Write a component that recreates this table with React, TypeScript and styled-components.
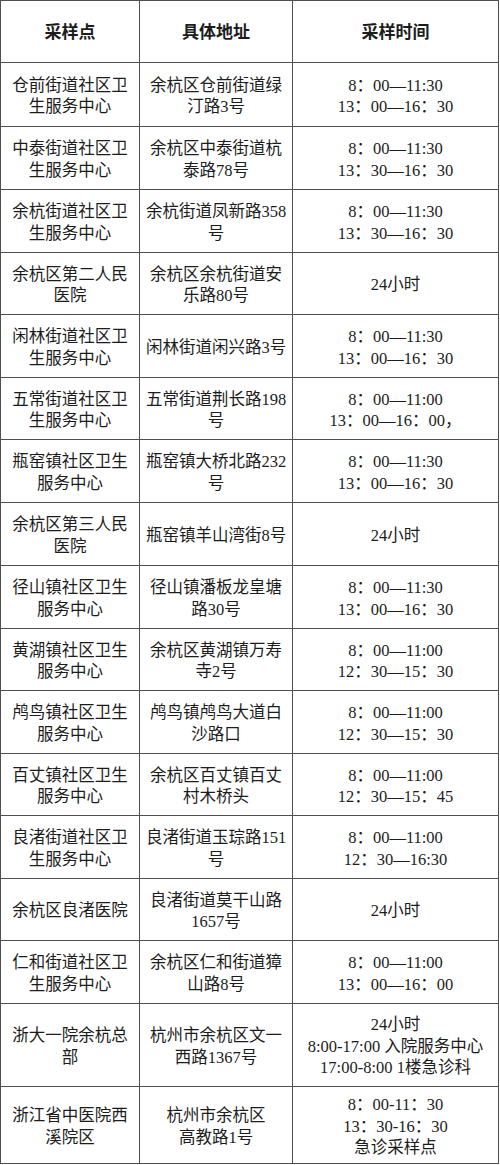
import { Fragment } from 'react';
import styled, { createGlobalStyle } from 'styled-components';

const GlobalStyle = createGlobalStyle`
  html, body {
    margin: 0;
    padding: 0;
    background: #ffffff;
  }
  * {
    box-sizing: border-box;
  }
`;

// row heights incl. bottom border, measured from the scan
const ROW_HEIGHTS = [62, 64, 63, 63, 62, 63, 62, 63, 63, 63, 62, 63, 62, 63, 62, 63, 83, 77];

const Table = styled.div<{ $rows: string }>`
  display: grid;
  grid-template-columns: 139px 153px 206px;
  grid-template-rows: ${(p) => p.$rows};
  width: 499px;
  border-top: 1px solid #4f4f4f;
  border-left: 1px solid #4f4f4f;
  font-family: 'Liberation Serif', 'Noto Sans CJK SC', serif;
  color: #1c1c1c;
`;

const Cell = styled.div<{ $head?: boolean }>`
  display: flex;
  flex-direction: column;
  align-items: center;
  justify-content: center;
  padding-top: ${(p) => (p.$head ? '2px' : '3px')};
  border-right: 1px solid #4f4f4f;
  border-bottom: 1px solid #4f4f4f;
  font-size: ${(p) => (p.$head ? '17px' : '16.5px')};
  font-weight: ${(p) => (p.$head ? 700 : 400)};
  line-height: 21.5px;
  text-align: center;
`;

const Line = styled.span`
  display: block;
  white-space: nowrap;
`;

type Row = [string[], string[], string[]];

const rows: Row[] = [
  [['仓前街道社区卫', '生服务中心'], ['余杭区仓前街道绿', '汀路3号'], ['8：00—11:30', '13：00—16：30']],
  [['中泰街道社区卫', '生服务中心'], ['余杭区中泰街道杭', '泰路78号'], ['8：00—11:30', '13：30—16：30']],
  [['余杭街道社区卫', '生服务中心'], ['余杭街道凤新路358', '号'], ['8：00—11:30', '13：30—16：30']],
  [['余杭区第二人民', '医院'], ['余杭区余杭街道安', '乐路80号'], ['24小时']],
  [['闲林街道社区卫', '生服务中心'], ['闲林街道闲兴路3号'], ['8：00—11:30', '13：00—16：30']],
  [['五常街道社区卫', '生服务中心'], ['五常街道荆长路198', '号'], ['8：00—11:00', '13：00—16：00，']],
  [['瓶窑镇社区卫生', '服务中心'], ['瓶窑镇大桥北路232', '号'], ['8：00—11:30', '13：00—16：30']],
  [['余杭区第三人民', '医院'], ['瓶窑镇羊山湾街8号'], ['24小时']],
  [['径山镇社区卫生', '服务中心'], ['径山镇潘板龙皇塘', '路30号'], ['8：00—11:30', '13：00—16：30']],
  [['黄湖镇社区卫生', '服务中心'], ['余杭区黄湖镇万寿', '寺2号'], ['8：00—11:00', '12：30—15：30']],
  [['鸬鸟镇社区卫生', '服务中心'], ['鸬鸟镇鸬鸟大道白', '沙路口'], ['8：00—11:00', '12：30—15：30']],
  [['百丈镇社区卫生', '服务中心'], ['余杭区百丈镇百丈', '村木桥头'], ['8：00—11:00', '12：30—15：45']],
  [['良渚街道社区卫', '生服务中心'], ['良渚街道玉琮路151', '号'], ['8：00—11:00', '12：30—16:30']],
  [['余杭区良渚医院'], ['良渚街道莫干山路', '1657号'], ['24小时']],
  [['仁和街道社区卫', '生服务中心'], ['余杭区仁和街道獐', '山路8号'], ['8：00—11:00', '13：00—16：00']],
  [['浙大一院余杭总', '部'], ['杭州市余杭区文一', '西路1367号'], ['24小时', '8:00-17:00 入院服务中心', '17:00-8:00 1楼急诊科']],
  [['浙江省中医院西', '溪院区'], ['杭州市余杭区', '高教路1号'], ['8：00-11：30', '13：30-16：30', '急诊采样点']],
];

function Lines({ items }: { items: string[] }) {
  return (
    <>
      {items.map((t, i) => (
        <Line key={i}>{t}</Line>
      ))}
    </>
  );
}

export default function App() {
  return (
    <>
      <GlobalStyle />
      <Table $rows={ROW_HEIGHTS.map((h) => `${h}px`).join(' ')}>
        <Cell $head>采样点</Cell>
        <Cell $head>具体地址</Cell>
        <Cell $head>采样时间</Cell>
        {rows.map((r, i) => (
          <Fragment key={i}>
            <Cell>
              <Lines items={r[0]} />
            </Cell>
            <Cell>
              <Lines items={r[1]} />
            </Cell>
            <Cell>
              <Lines items={r[2]} />
            </Cell>
          </Fragment>
        ))}
      </Table>
    </>
  );
}
